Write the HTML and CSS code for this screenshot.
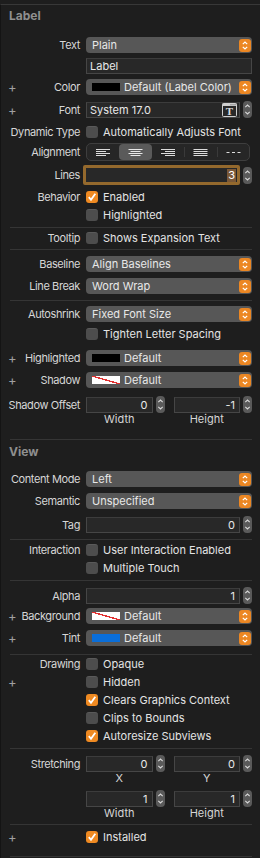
FILE: index.html
```html
<!DOCTYPE html>
<html>
<head>
	<title>Attributes Inspector</title>
	<link rel="stylesheet" href="styles.css">
</head>
<body>
	<svg class="defs" width="0" height="0">
		<defs>
			<symbol id="arrows" viewBox="0 0 12 13">
				<path d="M3.8 5.2 L6 3 L8.2 5.2 M3.8 7.8 L6 10 L8.2 7.8" fill="none" stroke="#fff" stroke-width="1.2"/>
			</symbol>
			<symbol id="step" viewBox="0 0 9 17">
				<path d="M2.3 6.2 L4.5 4 L6.7 6.2 M2.3 10.8 L4.5 13 L6.7 10.8" fill="none" stroke="#d8d8d8" stroke-width="1.1"/>
			</symbol>
			<symbol id="tick" viewBox="0 0 12 12">
				<path d="M2.8 6.2 L5 8.8 L9.3 2.8" fill="none" stroke="#fff" stroke-width="1.8"/>
			</symbol>
		</defs>
	</svg>

	<div class="panel">
		<h2>Label</h2>

		<div class="row r-text"><span class="lbl"><b>Text</b></span>
			<div class="popup">Plain<svg class="arr"><use href="#arrows"/></svg></div></div>
		<div class="row r-gap5"><span class="lbl"></span>
			<div class="field left">Label</div></div>
		<div class="row r-gap5"><span class="lbl"><i>+</i><b>Color</b></span>
			<div class="popup"><span class="swatch black"></span>Default (Label Color)<svg class="arr"><use href="#arrows"/></svg></div></div>
		<div class="row r-gap6"><span class="lbl"><i>+</i><b>Font</b></span>
			<div class="pair"><div class="field left">System 17.0
				<svg class="ticon" width="15" height="14" viewBox="0 0 15 14"><rect x="0.5" y="0.5" width="14" height="13" rx="1" fill="none" stroke="#cfcfcf"/><rect x="0.5" y="0.5" width="14" height="2.5" fill="#cfcfcf"/><circle cx="9" cy="1.8" r="0.5" fill="#333"/><circle cx="11" cy="1.8" r="0.5" fill="#333"/><circle cx="13" cy="1.8" r="0.5" fill="#333"/><text x="7.5" y="12.2" text-anchor="middle" font-family="Liberation Serif, serif" font-weight="bold" font-size="11" fill="#dcdcdc">T</text></svg>
			</div><svg class="stepper"><use href="#step"/></svg></div></div>
		<div class="row check r-gap8"><span class="lbl"><b>Dynamic Type</b></span>
			<label class="cb"><span class="box"></span>Automatically Adjusts Font</label></div>
		<div class="row r-seg"><span class="lbl"><b>Alignment</b></span>
			<div class="seg">
				<span><svg width="15" height="9"><path d="M0 1.5h14M0 3.5h10M0 5.5h14M0 7.5h10" stroke="#dcdcdc"/></svg></span>
				<span class="on"><svg width="15" height="9"><path d="M0.5 1.5h14M2.5 3.5h10M0.5 5.5h14M2.5 7.5h10" stroke="#e8e8e8"/></svg></span>
				<span><svg width="15" height="9"><path d="M1 1.5h14M5 3.5h10M1 5.5h14M5 7.5h10" stroke="#dcdcdc"/></svg></span>
				<span class="div"><svg width="15" height="9"><path d="M0.5 1.5h14M0.5 3.5h14M0.5 5.5h14M0.5 7.5h14" stroke="#dcdcdc"/></svg></span>
				<span class="div"><svg width="15" height="9"><path d="M0.5 4.5h3M6 4.5h3M11.5 4.5h3" stroke="#dcdcdc"/></svg></span>
			</div></div>
		<div class="row r-lines"><span class="lbl"><b>Lines</b></span>
			<div class="pair"><div class="field focus"><span class="sel">3</span></div><svg class="stepper"><use href="#step"/></svg></div></div>
		<div class="row check r-gap5"><span class="lbl"><b>Behavior</b></span>
			<label class="cb"><span class="box on"><svg><use href="#tick"/></svg></span>Enabled</label></div>
		<div class="row check r-gap4"><span class="lbl"></span>
			<label class="cb"><span class="box"></span>Highlighted</label></div>

		<hr class="s5">
		<div class="row check r-gap3"><span class="lbl"><b>Tooltip</b></span>
			<label class="cb"><span class="box"></span>Shows Expansion Text</label></div>
		<hr class="s4">

		<div class="row r-gap6"><span class="lbl"><b>Baseline</b></span>
			<div class="popup">Align Baselines<svg class="arr"><use href="#arrows"/></svg></div></div>
		<div class="row r-gap6"><span class="lbl"><b>Line Break</b></span>
			<div class="popup">Word Wrap<svg class="arr"><use href="#arrows"/></svg></div></div>
		<hr class="s6">

		<div class="row r-gap5"><span class="lbl"><b>Autoshrink</b></span>
			<div class="popup">Fixed Font Size<svg class="arr"><use href="#arrows"/></svg></div></div>
		<div class="row check r-gap5"><span class="lbl"></span>
			<label class="cb"><span class="box"></span>Tighten Letter Spacing</label></div>

		<div class="row r-gap9"><span class="lbl"><i>+</i><b>Highlighted</b></span>
			<div class="popup"><span class="swatch black"></span>Default<svg class="arr"><use href="#arrows"/></svg></div></div>
		<div class="row r-gap6"><span class="lbl"><i>+</i><b>Shadow</b></span>
			<div class="popup"><span class="swatch none"></span>Default<svg class="arr"><use href="#arrows"/></svg></div></div>
		<div class="row r-gap8"><span class="lbl"><b>Shadow Offset</b></span>
			<div class="duo">
				<div class="pair"><div class="field">0</div><svg class="stepper"><use href="#step"/></svg></div>
				<div class="pair"><div class="field">-1</div><svg class="stepper"><use href="#step"/></svg></div>
			</div></div>
		<div class="row caps"><span class="lbl"></span>
			<div class="duo"><span>Width</span><span>Height</span></div></div>
		<hr class="s13">

		<h2 class="view">View</h2>
		<div class="row r-gap11"><span class="lbl"><b>Content Mode</b></span>
			<div class="popup">Left<svg class="arr"><use href="#arrows"/></svg></div></div>
		<div class="row r-gap6"><span class="lbl"><b>Semantic</b></span>
			<div class="popup">Unspecified<svg class="arr"><use href="#arrows"/></svg></div></div>
		<div class="row r-gap7"><span class="lbl"><b>Tag</b></span>
			<div class="pair"><div class="field">0</div><svg class="stepper"><use href="#step"/></svg></div></div>
		<hr class="s7">

		<div class="row check r-gap3"><span class="lbl"><b>Interaction</b></span>
			<label class="cb"><span class="box"></span>User Interaction Enabled</label></div>
		<div class="row check r-gap4"><span class="lbl"></span>
			<label class="cb"><span class="box"></span>Multiple Touch</label></div>
		<hr class="s5">

		<div class="row r-gap6"><span class="lbl"><b>Alpha</b></span>
			<div class="pair"><div class="field">1</div><svg class="stepper"><use href="#step"/></svg></div></div>
		<div class="row r-gap5"><span class="lbl"><i>+</i><b>Background</b></span>
			<div class="popup"><span class="swatch none"></span>Default<svg class="arr"><use href="#arrows"/></svg></div></div>
		<div class="row r-gap6"><span class="lbl"><i>+</i><b>Tint</b></span>
			<div class="popup"><span class="swatch blue"></span>Default<svg class="arr"><use href="#arrows"/></svg></div></div>
		<hr class="s8">

		<div class="row check r-gap2"><span class="lbl"><b>Drawing</b></span>
			<label class="cb"><span class="box"></span>Opaque</label></div>
		<div class="row check r-gap4"><span class="lbl"><i>+</i></span>
			<label class="cb"><span class="box"></span>Hidden</label></div>
		<div class="row check r-gap4"><span class="lbl"></span>
			<label class="cb"><span class="box on"><svg><use href="#tick"/></svg></span>Clears Graphics Context</label></div>
		<div class="row check r-gap4"><span class="lbl"></span>
			<label class="cb"><span class="box"></span>Clips to Bounds</label></div>
		<div class="row check r-gap4"><span class="lbl"></span>
			<label class="cb"><span class="box on"><svg><use href="#tick"/></svg></span>Autoresize Subviews</label></div>
		<hr class="s5">

		<div class="row r-gap6"><span class="lbl"><b>Stretching</b></span>
			<div class="duo">
				<div class="pair"><div class="field">0</div><svg class="stepper"><use href="#step"/></svg></div>
				<div class="pair"><div class="field">0</div><svg class="stepper"><use href="#step"/></svg></div>
			</div></div>
		<div class="row caps"><span class="lbl"></span>
			<div class="duo"><span>X</span><span>Y</span></div></div>
		<div class="row r-gap5"><span class="lbl"></span>
			<div class="duo">
				<div class="pair"><div class="field">1</div><svg class="stepper"><use href="#step"/></svg></div>
				<div class="pair"><div class="field">1</div><svg class="stepper"><use href="#step"/></svg></div>
			</div></div>
		<div class="row caps"><span class="lbl"></span>
			<div class="duo"><span>Width</span><span>Height</span></div></div>
		<hr class="s4">

		<div class="row check r-gap5"><span class="lbl"><i>+</i></span>
			<label class="cb"><span class="box on"><svg><use href="#tick"/></svg></span>Installed</label></div>
		<hr class="s12">
	</div>
</body>
</html>
```

FILE: styles.css
```css
html {font-family: Inter, "Liberation Sans", sans-serif; font-size:11px; color:#e4e4e4;}
body {margin:0; background:#1e1e1e; height:858px; overflow:hidden;}
.defs {position:absolute;}
.panel {border-top:1px solid #383838; margin-top:4px; border-left:1px solid #141414;
	min-height:853px;}

h2 {margin:0; padding:3px 0 0 8px; font-size:12px; line-height:16px; font-weight:bold;
	color:#8f8f8f;}
h2.view {padding-top:0; margin-top:4px;}

.row {display:grid; grid-template-columns:79px 1fr; column-gap:6px; padding-right:8px;
	height:16px; align-items:center;}
.row.check {height:14px;}
.lbl {display:flex; align-items:center; justify-content:space-between; padding-left:7px;
	color:#d6d6d6; white-space:nowrap; letter-spacing:-0.4px;}
.lbl b {font-weight:normal; margin-left:auto;}
.lbl i {font-style:normal; font-size:13px; color:#a0a0a0; line-height:14px;}

.r-text {margin-top:13px;}
.r-gap2 {margin-top:2px;}
.r-gap3 {margin-top:3px;}
.r-gap4 {margin-top:4px;}
.r-gap5 {margin-top:5px;}
.r-gap6 {margin-top:6px;}
.r-gap7 {margin-top:7px;}
.r-gap8 {margin-top:8px;}
.r-gap9 {margin-top:9px;}
.r-gap11 {margin-top:11px;}
.r-seg {margin-top:4px; height:18px;}
.r-lines {margin-top:4px; height:20px;}
.caps {height:14px;}

hr {border:0; border-top:1px solid #353535; margin:0 8px 0 9px; height:0;}
hr.s4 {margin-top:4px;}
hr.s5 {margin-top:5px;}
hr.s6 {margin-top:6px;}
hr.s7 {margin-top:7px;}
hr.s8 {margin-top:8px;}
hr.s12 {margin-top:12px;}
hr.s13 {margin-top:13px;}

.popup {display:flex; align-items:center; height:16px; background:#575757; border-radius:4px;
	padding-left:6px; padding-right:1px; box-sizing:border-box; color:#e8e8e8;}
.popup .arr {width:12px; height:13px; margin-left:auto; background:#ec8723; border-radius:3px;}
.swatch {width:28px; height:8px; margin-right:4px; box-sizing:border-box;}
.swatch.black {background:#000;}
.swatch.blue {background:#0a6ed9;}
.swatch.none {background:#fff linear-gradient(to top right, transparent 45%, #e23030 46%, #e23030 54%, transparent 55%);}

.field {height:16px; box-sizing:border-box; background:#282828; border:1px solid #464646;
	border-top-color:#3c3c3c; display:flex; align-items:center; justify-content:flex-end;
	padding:0 4px; color:#e8e8e8; min-width:0;}
.field.left {justify-content:flex-start; padding-left:3px;}
.field .ticon {margin-left:auto; margin-right:-2px;}
.field.focus {height:20px; margin-left:-3px; border:3px solid #94692d; border-radius:2px;
	padding-right:1px;}
.sel {background:#7a5837; color:#fff; padding:0 1px; line-height:13px;}

.pair {display:flex; align-items:center; gap:3px;}
.pair .field {flex:1;}
.stepper {width:9px; height:17px; background:#5a5a5a; border-radius:4px; flex:none;}
.duo {display:grid; grid-template-columns:1fr 1fr; column-gap:9px;}
.caps .duo span {padding-right:12px; text-align:center; color:#d6d6d6;}

.cb {display:flex; align-items:center; gap:5px; color:#e4e4e4; white-space:nowrap;}
.box {width:12px; height:12px; box-sizing:border-box; border-radius:3px; background:#4d4d4d;
	border-top:1px solid #5a5a5a; flex:none;}
.box.on {background:#ef8a22; border:0;}
.box svg {width:12px; height:12px; display:block;}

.seg {display:grid; grid-template-columns:repeat(5, 1fr); height:18px; box-sizing:border-box;
	border:1px solid #3e3e3e; border-radius:5px; background:#262626; margin-right:2px;}
.seg span {display:flex; align-items:center; justify-content:center;}
.seg span.on {background:#5a5a5a; border-radius:4px;}
.seg span.div {border-left:1px solid #3a3a3a; margin:3px 0;}
```
